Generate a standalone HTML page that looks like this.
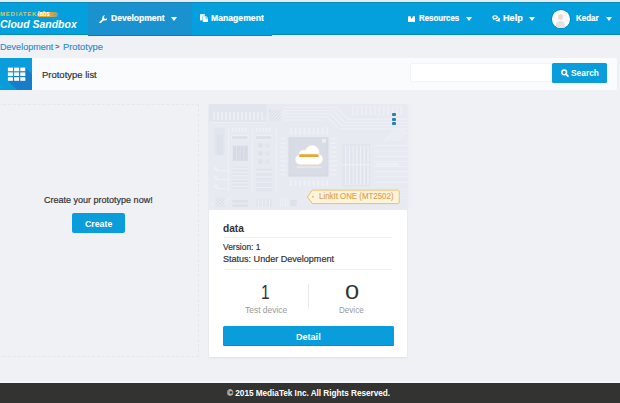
<!DOCTYPE html>
<html><head><meta charset="utf-8">
<style>
*{box-sizing:border-box;margin:0;padding:0}
html,body{width:620px;height:403px;overflow:hidden;background:#f0f1f5;font-family:"Liberation Sans",sans-serif;color:#333}
body{position:relative}
.abs{position:absolute}
.tx{white-space:nowrap}
#topstrip{left:0;top:0;width:620px;height:2px;background:#e6ecf4}
#hdr{left:0;top:2px;width:620px;height:32.7px;background:#04a0dd;box-shadow:inset 0 1px 0 rgba(20,110,140,.45), inset 0 -1px 0 rgba(0,70,120,.25)}
#navb{left:88px;top:2px;width:184px;height:33.6px;background:#04a0dd;box-shadow:inset 0 1px 0 rgba(20,110,140,.45), inset 0 -1px 0 rgba(0,70,120,.3)}
#act{left:88px;top:2px;width:104px;height:33.6px;background:#1a92cf;box-shadow:inset 0 1px 0 rgba(20,110,140,.45), inset 0 -1px 0 rgba(0,60,110,.3)}
.car{width:0;height:0;border-left:3.7px solid transparent;border-right:3.7px solid transparent;border-top:4.4px solid #fff}
#bar{left:0;top:58px;width:617px;height:31.5px;background:#fafbfd;border-radius:0 2px 2px 0}
#gridic{left:0;top:58px;width:31.7px;height:31.7px;background:#0a9ddb;overflow:hidden}
#sinput{left:410px;top:62.5px;width:141.5px;height:19.7px;background:#fff;border:1px solid #f3f4f8}
#sbtn{left:552px;top:63px;width:55px;height:19.5px;background:#0a9ddb;border-radius:1.5px}
#dash{left:-2px;top:104.1px;width:200.7px;height:252.6px;border:1px dashed #e6e8ee}
#cbtn{left:71.8px;top:213px;width:52.8px;height:20.2px;background:#0a9ddb;border-radius:2px}
#card{left:208.8px;top:104.2px;width:198.4px;height:253.1px;background:#fff;box-shadow:0 1px 2px rgba(60,70,100,.10)}
#cimg{left:208.8px;top:104.2px;width:198.4px;height:105.5px;background:#e7eaf1;overflow:hidden}
.hr{left:223.6px;width:168.7px;height:1px;background:#eceef2}
#dbtn{left:223.3px;top:325.8px;width:170.3px;height:20.4px;background:#0a9ddb;border-radius:1.5px;box-shadow:inset 0 -1px 0 rgba(0,60,110,.18)}
#ftr{left:0;top:383.2px;width:620px;height:20px;background:#333431;box-shadow:0 -1.6px 0 #f8f9fb}
</style></head><body>
<div class="abs" id="topstrip"></div>
<div class="abs" id="hdr"></div>
<div class="abs" id="navb"></div>
<div class="abs" id="act"></div>
<div class="abs" style="left:36.8px;top:11.7px;width:21.4px;height:5.8px;border-radius:2.9px;background:linear-gradient(90deg,#f2a52c 0%,#f0a736 55%,rgba(225,165,70,.55) 100%)"></div>

<svg class="abs" style="left:98.9px;top:14.6px" width="8.6" height="8.8" viewBox="0 0 10 10"><path d="M1.3 8.7 L5.4 4.6" stroke="#fff" stroke-width="2.1" stroke-linecap="round" fill="none"/><path d="M6.9 0.3 A3 3 0 1 0 9.7 3.1 L8.1 4.6 L6.2 4.3 L5.6 2.1 Z" fill="#fff"/></svg>
<div class="abs car" style="left:171.4px;top:16.9px"></div>
<svg class="abs" style="left:199.7px;top:14.1px" width="8.2" height="8.2" viewBox="0 0 8.2 8.2"><path d="M0 0.2 H4.9 V6.4 H0 Z" fill="#fff"/><path d="M2.9 2.2 H6.2 L8.2 4.1 V8.2 H2.9 Z" fill="#fff" stroke="#0a9ddb" stroke-width=".7"/><path d="M2.9 2.2 H6.2 L8.2 4.1 V8.2 H2.9 Z" fill="#fff"/><path d="M6 2.4 V4.3 H8" stroke="#0a9ddb" stroke-width=".6" fill="none"/></svg>

<svg class="abs" style="left:408px;top:15.5px" width="7.4" height="6.6" viewBox="0 0 7.4 6.6"><rect x="0" y="0.2" width="7.4" height="6.2" rx=".6" fill="#fff"/><path d="M2.4 0.2 H5 L3.7 2.9 Z" fill="#1a78a8"/></svg>
<div class="abs car" style="left:465.6px;top:16.9px"></div>
<svg class="abs" style="left:491.8px;top:15.4px" width="8.6" height="7.4" viewBox="0 0 10 8.8"><path d="M3.6 0.2 C5.6 0.2 7 1.3 7 2.8 C7 4.3 5.6 5.4 3.6 5.4 C3.2 5.4 2.9 5.4 2.6 5.3 L0.9 6.2 L1.4 4.8 C0.6 4.3 0.2 3.6 0.2 2.8 C0.2 1.3 1.6 0.2 3.6 0.2 Z" fill="#fff"/><ellipse cx="3.6" cy="2.8" rx="1.9" ry="1.2" fill="#2aa6dc"/><path d="M7.8 2.9 C9 3.3 9.8 4.1 9.8 5.1 C9.8 5.8 9.4 6.4 8.7 6.9 L9.2 8.2 L7.6 7.4 C7.3 7.5 6.9 7.5 6.6 7.5 C5.5 7.5 4.6 7.1 4 6.4 C6.3 6.2 7.9 4.8 7.8 2.9 Z" fill="#fff"/></svg>
<div class="abs car" style="left:528.9px;top:16.9px"></div>
<div class="abs" style="left:552.1px;top:10.3px;width:17.5px;height:17.5px;border-radius:50%;background:#fbfbfc;overflow:hidden;box-shadow:0 0 0 .8px rgba(0,70,120,.3)"><div class="abs" style="left:6.4px;top:4.2px;width:4.7px;height:5.8px;border-radius:50%;background:#ecdcd4"></div><div class="abs" style="left:4.4px;top:11px;width:8.8px;height:8px;border-radius:50% 50% 0 0;background:#e6e2e4"></div></div>
<div class="abs car" style="left:605.6px;top:16.9px"></div>

<div class="abs" id="bar"></div>
<div class="abs" id="gridic">
<svg class="abs" style="left:0;top:0" width="32" height="32" viewBox="0 0 32 32"><path d="M25.3 9.6 L32 16.3 V32 H17.1 L7.9 22.8 Z" fill="#1778c6" opacity=".85"/>
<g fill="#fff"><rect x="7.9" y="9.6" width="5" height="3.6"/><rect x="14.1" y="9.6" width="5" height="3.6"/><rect x="20.3" y="9.6" width="5" height="3.6"/><rect x="7.9" y="14.4" width="5" height="3.6"/><rect x="14.1" y="14.4" width="5" height="3.6"/><rect x="20.3" y="14.4" width="5" height="3.6"/><rect x="7.9" y="19.2" width="5" height="3.6"/><rect x="14.1" y="19.2" width="5" height="3.6"/><rect x="20.3" y="19.2" width="5" height="3.6"/></g></svg>
</div>
<div class="abs" id="sinput"></div>
<div class="abs" id="sbtn"></div>
<svg class="abs" style="left:561.2px;top:69.4px" width="7.8" height="8" viewBox="0 0 8 8"><circle cx="3.3" cy="3.3" r="2.4" stroke="#fff" stroke-width="1.6" fill="none"/><path d="M5.2 5.2 L7.1 7.1" stroke="#fff" stroke-width="1.8" stroke-linecap="round"/></svg>

<div class="abs" id="dash"></div>
<div class="abs" id="cbtn"></div>

<div class="abs" id="card"></div>
<div class="abs" id="cimg">
<svg class="abs" style="left:0;top:0" width="198.4" height="106" viewBox="208.8 104.2 198.4 106"><rect x="208.8" y="104.0" width="57.2" height="18.0" fill="#e1e5ed"/><rect x="213.0" y="112.0" width="1.6" height="8.0" fill="#eef0f6"/><rect x="217.0" y="112.0" width="1.6" height="8.0" fill="#eef0f6"/><rect x="221.0" y="112.0" width="1.6" height="8.0" fill="#eef0f6"/><rect x="225.0" y="112.0" width="1.6" height="8.0" fill="#eef0f6"/><rect x="229.0" y="112.0" width="1.6" height="8.0" fill="#eef0f6"/><rect x="233.0" y="112.0" width="1.6" height="8.0" fill="#eef0f6"/><rect x="237.0" y="112.0" width="1.6" height="8.0" fill="#eef0f6"/><rect x="241.0" y="112.0" width="1.6" height="8.0" fill="#eef0f6"/><rect x="245.0" y="112.0" width="1.6" height="8.0" fill="#eef0f6"/><rect x="249.0" y="112.0" width="1.6" height="8.0" fill="#eef0f6"/><rect x="253.0" y="112.0" width="1.6" height="8.0" fill="#eef0f6"/><rect x="257.0" y="112.0" width="1.6" height="8.0" fill="#eef0f6"/><rect x="261.0" y="112.0" width="1.6" height="8.0" fill="#eef0f6"/><path d="M210.0 123.0 L266.0 123.0" stroke="#eef0f6" stroke-width="1" fill="none"/><rect x="269.0" y="110.0" width="11.5" height="10.5" fill="#dde1ea"/><path d="M262.6 120.5 L273.1 110.0" stroke="#eef0f6" stroke-width="1" fill="none"/><path d="M265.8 120.5 L276.3 110.0" stroke="#eef0f6" stroke-width="1" fill="none"/><path d="M269.0 120.5 L279.5 110.0" stroke="#eef0f6" stroke-width="1" fill="none"/><path d="M272.2 120.5 L282.7 110.0" stroke="#eef0f6" stroke-width="1" fill="none"/><path d="M275.4 120.5 L285.9 110.0" stroke="#eef0f6" stroke-width="1" fill="none"/><path d="M278.6 120.5 L289.1 110.0" stroke="#eef0f6" stroke-width="1" fill="none"/><path d="M283.0 107.5 L336.0 107.5" stroke="#eef0f6" stroke-width="1" fill="none"/><path d="M283.0 110.7 L333.0 110.7" stroke="#eef0f6" stroke-width="1" fill="none"/><path d="M283.0 113.9 L330.0 113.9" stroke="#eef0f6" stroke-width="1" fill="none"/><path d="M283.0 117.1 L327.0 117.1" stroke="#eef0f6" stroke-width="1" fill="none"/><path d="M283.0 120.3 L324.0 120.3" stroke="#eef0f6" stroke-width="1" fill="none"/><path d="M336.0 107.5 L348.0 119.5" stroke="#eef0f6" stroke-width="1.2" fill="none"/><path d="M348.0 119.5 L408.0 119.5" stroke="#eef0f6" stroke-width="1" fill="none"/><path d="M333.0 110.7 L345.0 122.7" stroke="#eef0f6" stroke-width="1.2" fill="none"/><path d="M345.0 122.7 L408.0 122.7" stroke="#eef0f6" stroke-width="1" fill="none"/><path d="M330.0 113.9 L342.0 125.9" stroke="#eef0f6" stroke-width="1.2" fill="none"/><path d="M342.0 125.9 L408.0 125.9" stroke="#eef0f6" stroke-width="1" fill="none"/><path d="M327.0 117.1 L339.0 129.1" stroke="#eef0f6" stroke-width="1.2" fill="none"/><path d="M339.0 129.1 L408.0 129.1" stroke="#eef0f6" stroke-width="1" fill="none"/><rect x="352.0" y="106.0" width="1.5" height="9.0" fill="#eef0f6"/><rect x="356.4" y="106.0" width="1.5" height="9.0" fill="#eef0f6"/><rect x="360.8" y="106.0" width="1.5" height="9.0" fill="#eef0f6"/><rect x="365.2" y="106.0" width="1.5" height="9.0" fill="#eef0f6"/><rect x="369.6" y="106.0" width="1.5" height="9.0" fill="#eef0f6"/><rect x="374.0" y="106.0" width="1.5" height="9.0" fill="#eef0f6"/><rect x="378.4" y="106.0" width="1.5" height="9.0" fill="#eef0f6"/><rect x="382.8" y="106.0" width="1.5" height="9.0" fill="#eef0f6"/><rect x="387.2" y="106.0" width="1.5" height="9.0" fill="#eef0f6"/><rect x="391.6" y="106.0" width="1.5" height="9.0" fill="#eef0f6"/><rect x="396.0" y="106.0" width="1.5" height="9.0" fill="#eef0f6"/><rect x="400.4" y="106.0" width="1.5" height="9.0" fill="#eef0f6"/><path d="M384.0 141.0 L396.0 129.0" stroke="#eef0f6" stroke-width="1.2" fill="none"/><path d="M387.5 141.0 L399.5 129.0" stroke="#eef0f6" stroke-width="1.2" fill="none"/><path d="M391.0 141.0 L403.0 129.0" stroke="#eef0f6" stroke-width="1.2" fill="none"/><path d="M394.5 141.0 L406.5 129.0" stroke="#eef0f6" stroke-width="1.2" fill="none"/><path d="M398.0 141.0 L410.0 129.0" stroke="#eef0f6" stroke-width="1.2" fill="none"/><rect x="214.5" y="128.0" width="10.0" height="27.0" fill="#e1e5ed"/><rect x="216.5" y="135.0" width="6.0" height="20.0" fill="#dde1ea"/><rect x="232.0" y="128.0" width="1.8" height="4.0" fill="#eef0f6"/><rect x="235.2" y="128.0" width="1.8" height="4.0" fill="#eef0f6"/><rect x="238.4" y="128.0" width="1.8" height="4.0" fill="#eef0f6"/><rect x="241.6" y="128.0" width="1.8" height="4.0" fill="#eef0f6"/><rect x="244.8" y="128.0" width="1.8" height="4.0" fill="#eef0f6"/><rect x="256.0" y="128.0" width="1.8" height="4.0" fill="#eef0f6"/><rect x="259.2" y="128.0" width="1.8" height="4.0" fill="#eef0f6"/><rect x="262.4" y="128.0" width="1.8" height="4.0" fill="#eef0f6"/><rect x="265.6" y="128.0" width="1.8" height="4.0" fill="#eef0f6"/><rect x="268.8" y="128.0" width="1.8" height="4.0" fill="#eef0f6"/><rect x="231" y="135.6" width="17.2" height="4.4" rx="2.2" fill="#dde1ea" stroke="#eef0f6" stroke-width="1"/><rect x="255" y="135.6" width="17.2" height="4.4" rx="2.2" fill="#dde1ea" stroke="#eef0f6" stroke-width="1"/><rect x="232.6" y="146.0" width="15.0" height="15.0" fill="#d6dae4"/><rect x="236.0" y="146.0" width="0.8" height="15.0" fill="#e1e5ed"/><rect x="239.6" y="146.0" width="0.8" height="15.0" fill="#e1e5ed"/><rect x="243.2" y="146.0" width="0.8" height="15.0" fill="#e1e5ed"/><rect x="258.0" y="143.5" width="4.5" height="4.5" fill="#dde1ea"/><rect x="265.0" y="143.5" width="4.5" height="4.5" fill="#e1e5ed"/><rect x="258.0" y="151.5" width="4.5" height="4.5" fill="#dde1ea"/><rect x="265.0" y="151.5" width="4.5" height="4.5" fill="#e1e5ed"/><rect x="258.0" y="159.5" width="4.5" height="4.5" fill="#dde1ea"/><rect x="265.0" y="159.5" width="4.5" height="4.5" fill="#e1e5ed"/><path d="M252.0 128.0 L252.0 192.0" stroke="#eef0f6" stroke-width="1" fill="none"/><path d="M276.0 128.0 L276.0 192.0" stroke="#eef0f6" stroke-width="1" fill="none"/><path d="M228.0 128.0 L228.0 192.0" stroke="#eef0f6" stroke-width="1" fill="none"/><rect x="280.0" y="138.0" width="6.0" height="1.6" fill="#eef0f6"/><rect x="280.0" y="142.5" width="6.0" height="1.6" fill="#eef0f6"/><rect x="280.0" y="147.0" width="6.0" height="1.6" fill="#eef0f6"/><rect x="280.0" y="151.5" width="6.0" height="1.6" fill="#eef0f6"/><rect x="280.0" y="156.0" width="6.0" height="1.6" fill="#eef0f6"/><rect x="280.0" y="160.5" width="6.0" height="1.6" fill="#eef0f6"/><rect x="280.0" y="165.0" width="6.0" height="1.6" fill="#eef0f6"/><rect x="280.0" y="169.5" width="6.0" height="1.6" fill="#eef0f6"/><rect x="280.0" y="174.0" width="6.0" height="1.6" fill="#eef0f6"/><rect x="290.0" y="128.0" width="1.8" height="6.8" fill="#eef0f6"/><rect x="290.0" y="180.0" width="1.8" height="6.2" fill="#eef0f6"/><rect x="294.5" y="128.0" width="1.8" height="6.8" fill="#eef0f6"/><rect x="294.5" y="180.0" width="1.8" height="6.2" fill="#eef0f6"/><rect x="299.0" y="128.0" width="1.8" height="6.8" fill="#eef0f6"/><rect x="299.0" y="180.0" width="1.8" height="6.2" fill="#eef0f6"/><rect x="303.5" y="128.0" width="1.8" height="6.8" fill="#eef0f6"/><rect x="303.5" y="180.0" width="1.8" height="6.2" fill="#eef0f6"/><rect x="308.0" y="128.0" width="1.8" height="6.8" fill="#eef0f6"/><rect x="308.0" y="180.0" width="1.8" height="6.2" fill="#eef0f6"/><rect x="312.5" y="128.0" width="1.8" height="6.8" fill="#eef0f6"/><rect x="312.5" y="180.0" width="1.8" height="6.2" fill="#eef0f6"/><rect x="317.0" y="128.0" width="1.8" height="6.8" fill="#eef0f6"/><rect x="317.0" y="180.0" width="1.8" height="6.2" fill="#eef0f6"/><rect x="321.5" y="128.0" width="1.8" height="6.8" fill="#eef0f6"/><rect x="321.5" y="180.0" width="1.8" height="6.2" fill="#eef0f6"/><rect x="326.0" y="128.0" width="1.8" height="6.8" fill="#eef0f6"/><rect x="326.0" y="180.0" width="1.8" height="6.2" fill="#eef0f6"/><rect x="330.5" y="138.0" width="6.0" height="1.6" fill="#eef0f6"/><rect x="330.5" y="142.5" width="6.0" height="1.6" fill="#eef0f6"/><rect x="330.5" y="147.0" width="6.0" height="1.6" fill="#eef0f6"/><rect x="330.5" y="151.5" width="6.0" height="1.6" fill="#eef0f6"/><rect x="330.5" y="156.0" width="6.0" height="1.6" fill="#eef0f6"/><rect x="330.5" y="160.5" width="6.0" height="1.6" fill="#eef0f6"/><rect x="330.5" y="165.0" width="6.0" height="1.6" fill="#eef0f6"/><rect x="330.5" y="169.5" width="6.0" height="1.6" fill="#eef0f6"/><rect x="330.5" y="174.0" width="6.0" height="1.6" fill="#eef0f6"/><rect x="288.2" y="137.4" width="40.0" height="39.4" fill="#d6dae4"/><rect x="290.2" y="139.4" width="36.0" height="35.4" fill="#d8dce5"/><rect x="322.0" y="139.2" width="3.6" height="3.6" fill="#eef0f6"/><rect x="232.0" y="167.0" width="16.0" height="24.0" fill="#e1e5ed"/><path d="M232.0 169.0 L248.0 169.0" stroke="#eef0f6" stroke-width="1" fill="none"/><path d="M232.0 172.5 L248.0 172.5" stroke="#eef0f6" stroke-width="1" fill="none"/><path d="M232.0 176.0 L248.0 176.0" stroke="#eef0f6" stroke-width="1" fill="none"/><path d="M232.0 179.5 L248.0 179.5" stroke="#eef0f6" stroke-width="1" fill="none"/><path d="M232.0 183.0 L248.0 183.0" stroke="#eef0f6" stroke-width="1" fill="none"/><path d="M232.0 186.5 L248.0 186.5" stroke="#eef0f6" stroke-width="1" fill="none"/><path d="M232.0 190.0 L248.0 190.0" stroke="#eef0f6" stroke-width="1" fill="none"/><rect x="256.0" y="168.5" width="16.0" height="23.0" fill="#e1e5ed"/><path d="M256.0 172.0 L272.0 172.0" stroke="#eef0f6" stroke-width="1" fill="none"/><path d="M256.0 177.2 L272.0 177.2" stroke="#eef0f6" stroke-width="1" fill="none"/><path d="M256.0 182.4 L272.0 182.4" stroke="#eef0f6" stroke-width="1" fill="none"/><path d="M256.0 187.6 L272.0 187.6" stroke="#eef0f6" stroke-width="1" fill="none"/><rect x="214.0" y="167.0" width="3.0" height="3.0" fill="#eef0f6"/><path d="M216.0 171.0 L230.0 171.0" stroke="#eef0f6" stroke-width="1" fill="none"/><rect x="214.0" y="176.0" width="3.0" height="3.0" fill="#eef0f6"/><path d="M216.0 180.0 L230.0 180.0" stroke="#eef0f6" stroke-width="1" fill="none"/><rect x="214.0" y="185.0" width="3.0" height="3.0" fill="#eef0f6"/><path d="M216.0 189.0 L230.0 189.0" stroke="#eef0f6" stroke-width="1" fill="none"/><rect x="215.0" y="197.5" width="9.5" height="9.5" fill="#dde1ea"/><path d="M208.4 207.0 L217.9 197.5" stroke="#eef0f6" stroke-width="1" fill="none"/><path d="M211.7 207.0 L221.2 197.5" stroke="#eef0f6" stroke-width="1" fill="none"/><path d="M215.0 207.0 L224.5 197.5" stroke="#eef0f6" stroke-width="1" fill="none"/><path d="M218.3 207.0 L227.8 197.5" stroke="#eef0f6" stroke-width="1" fill="none"/><path d="M221.6 207.0 L231.1 197.5" stroke="#eef0f6" stroke-width="1" fill="none"/><rect x="232.0" y="200.2" width="16.0" height="2.6" fill="#dde1ea"/><rect x="232.0" y="204.4" width="16.0" height="2.6" fill="#dde1ea"/><rect x="256.0" y="199.5" width="16.0" height="7.5" fill="#e1e5ed"/><rect x="258.0" y="199.5" width="1.0" height="7.5" fill="#eef0f6"/><rect x="261.6" y="199.5" width="1.0" height="7.5" fill="#eef0f6"/><rect x="265.2" y="199.5" width="1.0" height="7.5" fill="#eef0f6"/><rect x="268.8" y="199.5" width="1.0" height="7.5" fill="#eef0f6"/><rect x="290.0" y="200.0" width="6.5" height="6.5" fill="#dde1ea"/><rect x="280.0" y="198.0" width="1.0" height="9.0" fill="#eef0f6"/><rect x="282.4" y="198.0" width="1.0" height="9.0" fill="#eef0f6"/><rect x="284.8" y="198.0" width="1.0" height="9.0" fill="#eef0f6"/><rect x="287.2" y="198.0" width="1.0" height="9.0" fill="#eef0f6"/><rect x="342.0" y="144.0" width="28.0" height="43.0" fill="#e1e5ed"/><rect x="345.0" y="146.0" width="1.2" height="39.0" fill="#eef0f6"/><rect x="348.7" y="146.0" width="1.2" height="39.0" fill="#eef0f6"/><rect x="352.4" y="146.0" width="1.2" height="39.0" fill="#eef0f6"/><rect x="356.1" y="146.0" width="1.2" height="39.0" fill="#eef0f6"/><rect x="359.8" y="146.0" width="1.2" height="39.0" fill="#eef0f6"/><rect x="363.5" y="146.0" width="1.2" height="39.0" fill="#eef0f6"/><rect x="367.2" y="146.0" width="1.2" height="39.0" fill="#eef0f6"/><path d="M342.0 165.0 L370.0 165.0" stroke="#eef0f6" stroke-width="1.2" fill="none"/><path d="M374.0 146.0 L407.0 146.0" stroke="#eef0f6" stroke-width="1" fill="none"/><path d="M374.0 151.2 L407.0 151.2" stroke="#eef0f6" stroke-width="1" fill="none"/><path d="M374.0 156.4 L407.0 156.4" stroke="#eef0f6" stroke-width="1" fill="none"/><path d="M374.0 161.6 L407.0 161.6" stroke="#eef0f6" stroke-width="1" fill="none"/><path d="M374.0 166.8 L407.0 166.8" stroke="#eef0f6" stroke-width="1" fill="none"/><path d="M374.0 172.0 L407.0 172.0" stroke="#eef0f6" stroke-width="1" fill="none"/><path d="M374.0 177.2 L407.0 177.2" stroke="#eef0f6" stroke-width="1" fill="none"/><path d="M374.0 182.4 L407.0 182.4" stroke="#eef0f6" stroke-width="1" fill="none"/><rect x="376.0" y="163.0" width="22.0" height="3.0" fill="#eef0f6"/><path d="M334.0 190.0 L408.0 190.0" stroke="#eef0f6" stroke-width="0.8" fill="none"/><path d="M334.0 193.0 L408.0 193.0" stroke="#eef0f6" stroke-width="0.8" fill="none"/><path d="M334.0 196.0 L408.0 196.0" stroke="#eef0f6" stroke-width="0.8" fill="none"/><path d="M334.0 199.0 L408.0 199.0" stroke="#eef0f6" stroke-width="0.8" fill="none"/></svg>
</div>
<svg class="abs" style="left:290px;top:140px" width="40" height="32" viewBox="290 140 40 32">
<g fill="#fbefd6" stroke="#fbefd6" stroke-width="1.4"><circle cx="300.2" cy="159.6" r="4.4"/><circle cx="317.6" cy="159.2" r="4.8"/><circle cx="312.2" cy="152.3" r="6.6"/><circle cx="304" cy="154.8" r="4.6"/><rect x="300.2" y="156" width="17.4" height="8"/></g>
<g fill="#fff"><circle cx="300.2" cy="159.6" r="4.4"/><circle cx="317.6" cy="159.2" r="4.8"/><circle cx="312.2" cy="152.3" r="6.6"/><circle cx="304" cy="154.8" r="4.6"/><rect x="300.2" y="155" width="17.4" height="9"/></g>
<rect x="299.2" y="154.3" width="19.4" height="2.7" rx=".8" fill="#e8a633"/>
<rect x="296.5" y="166.2" width="25" height="1.8" fill="#e4e7ef"/>
</svg>
<svg class="abs" style="left:305px;top:188px" width="97" height="18" viewBox="305 188 97 18">
<path d="M312.4 190.1 H397.6 Q399.2 190.1 399.2 191.7 V202 Q399.2 203.6 397.6 203.6 H312.4 L307.4 196.85 Z" fill="#fdf4de" stroke="#ecc06a" stroke-width="1"/>
<circle cx="312.8" cy="196.85" r="1" fill="#ecc06a"/>
</svg>
<div class="abs" style="left:391.9px;top:112.9px;width:4.1px;height:3.4px;border-radius:.9px;background:#2d7fba"></div>
<div class="abs" style="left:391.9px;top:117.5px;width:4.1px;height:3.3px;border-radius:.9px;background:#2d7fba"></div>
<div class="abs" style="left:391.9px;top:122.1px;width:4.1px;height:3.4px;border-radius:.9px;background:#2d7fba"></div><div class="abs" style="left:407.2px;top:104.2px;width:8px;height:104px;background:linear-gradient(90deg,rgba(232,236,246,.4),rgba(238,240,248,.15))"></div>
<div class="abs hr" style="top:237px"></div>
<div class="abs hr" style="top:268.5px"></div>
<div class="abs" style="left:308px;top:283.5px;width:1px;height:25.5px;background:#e9ebf0"></div>
<div class="abs" id="dbtn"></div>
<div class="abs" id="ftr"></div>
<div class="abs tx" id="t_mtk" style="left:-0.00px;top:11.12px;font-size:6px;line-height:6px;font-weight:bold;color:#d4c56e;letter-spacing:0.787px;transform:scaleX(1.0000);transform-origin:0 0;">MEDIATEK</div>
<div class="abs tx" id="t_labs" style="left:37.95px;top:10.37px;font-size:7px;line-height:7px;font-weight:bold;color:#fff;letter-spacing:0.000px;transform:scaleX(0.8491);transform-origin:0 0;">labs</div>
<div class="abs tx" id="t_logo" style="left:-0.26px;top:19.02px;font-size:11.2px;line-height:11.2px;font-weight:bold;color:#fff;letter-spacing:0.000px;transform:scaleX(0.9351);transform-origin:0 0;font-style:italic;">Cloud Sandbox</div>
<div class="abs tx" id="t_dev" style="left:111.23px;top:14.23px;font-size:9.3px;line-height:9.3px;font-weight:bold;color:#fff;letter-spacing:0.000px;transform:scaleX(0.9185);transform-origin:0 0;-webkit-text-stroke:0.2px #fff;">Development</div>
<div class="abs tx" id="t_mgmt" style="left:211.44px;top:14.23px;font-size:9.3px;line-height:9.3px;font-weight:bold;color:#fff;letter-spacing:0.000px;transform:scaleX(0.9296);transform-origin:0 0;-webkit-text-stroke:0.2px #fff;">Management</div>
<div class="abs tx" id="t_res" style="left:418.84px;top:14.23px;font-size:9.3px;line-height:9.3px;font-weight:bold;color:#fff;letter-spacing:0.000px;transform:scaleX(0.8461);transform-origin:0 0;-webkit-text-stroke:0.2px #fff;">Resources</div>
<div class="abs tx" id="t_help" style="left:503.14px;top:14.23px;font-size:9.3px;line-height:9.3px;font-weight:bold;color:#fff;letter-spacing:0.000px;transform:scaleX(0.9789);transform-origin:0 0;-webkit-text-stroke:0.2px #fff;">Help</div>
<div class="abs tx" id="t_kedar" style="left:576.43px;top:14.23px;font-size:9.3px;line-height:9.3px;font-weight:bold;color:#fff;letter-spacing:0.000px;transform:scaleX(0.8547);transform-origin:0 0;-webkit-text-stroke:0.2px #fff;">Kedar</div>
<div class="abs tx" id="t_bc1" style="left:-0.18px;top:42.06px;font-size:9.5px;line-height:9.5px;font-weight:normal;color:#2b8dc8;letter-spacing:0.000px;transform:scaleX(0.9529);transform-origin:0 0;-webkit-text-stroke:0.15px #2b8dc8;">Development</div>
<div class="abs tx" id="t_bc2" style="left:55.20px;top:43.03px;font-size:8px;line-height:8px;font-weight:bold;color:#666;letter-spacing:0.000px;transform:scaleX(0.9846);transform-origin:0 0;">&gt;</div>
<div class="abs tx" id="t_bc3" style="left:62.52px;top:42.06px;font-size:9.5px;line-height:9.5px;font-weight:normal;color:#2b8dc8;letter-spacing:0.000px;transform:scaleX(0.9823);transform-origin:0 0;-webkit-text-stroke:0.15px #2b8dc8;">Prototype</div>
<div class="abs tx" id="t_pl" style="left:41.52px;top:69.76px;font-size:9.5px;line-height:9.5px;font-weight:normal;color:#333;letter-spacing:0.000px;transform:scaleX(0.9969);transform-origin:0 0;-webkit-text-stroke:0.2px #333;">Prototype list</div>
<div class="abs tx" id="t_search" style="left:570.62px;top:68.46px;font-size:9.5px;line-height:9.5px;font-weight:bold;color:#fff;letter-spacing:0.000px;transform:scaleX(0.8821);transform-origin:0 0;">Search</div>
<div class="abs tx" id="t_cnow" style="left:44.23px;top:194.76px;font-size:9.5px;line-height:9.5px;font-weight:normal;color:#333;letter-spacing:0.000px;transform:scaleX(0.9481);transform-origin:0 0;-webkit-text-stroke:0.2px #333;">Create your prototype now!</div>
<div class="abs tx" id="t_create" style="left:84.93px;top:218.76px;font-size:9.5px;line-height:9.5px;font-weight:bold;color:#fff;letter-spacing:0.000px;transform:scaleX(0.9213);transform-origin:0 0;">Create</div>
<div class="abs tx" id="t_data" style="left:223.36px;top:222.66px;font-size:10.8px;line-height:10.8px;font-weight:bold;color:#333;letter-spacing:0.000px;transform:scaleX(0.9404);transform-origin:0 0;">data</div>
<div class="abs tx" id="t_ver" style="left:223.33px;top:242.46px;font-size:9.5px;line-height:9.5px;font-weight:normal;color:#333;letter-spacing:0.000px;transform:scaleX(0.8864);transform-origin:0 0;-webkit-text-stroke:0.2px #333;">Version: 1</div>
<div class="abs tx" id="t_stat" style="left:223.33px;top:253.66px;font-size:9.5px;line-height:9.5px;font-weight:normal;color:#333;letter-spacing:0.000px;transform:scaleX(0.9507);transform-origin:0 0;-webkit-text-stroke:0.2px #333;">Status: Under Development</div>
<div class="abs tx" id="t_n1" style="left:260.88px;top:282.45px;font-size:20.5px;line-height:20.5px;font-weight:normal;color:#333;letter-spacing:0.000px;transform:scaleX(0.7584);transform-origin:0 0;">1</div>
<div class="abs tx" id="t_n0" style="left:344.68px;top:282.45px;font-size:20.5px;line-height:20.5px;font-weight:normal;color:#333;letter-spacing:0.000px;transform:scaleX(1.2405);transform-origin:0 0;">0</div>
<div class="abs tx" id="t_td" style="left:244.53px;top:305.06px;font-size:9.5px;line-height:9.5px;font-weight:normal;color:#999;letter-spacing:0.000px;transform:scaleX(0.8889);transform-origin:0 0;">Test device</div>
<div class="abs tx" id="t_d" style="left:339.02px;top:305.06px;font-size:9.5px;line-height:9.5px;font-weight:normal;color:#999;letter-spacing:0.000px;transform:scaleX(0.8486);transform-origin:0 0;">Device</div>
<div class="abs tx" id="t_detail" style="left:296.02px;top:332.06px;font-size:9.5px;line-height:9.5px;font-weight:bold;color:#fff;letter-spacing:0.000px;transform:scaleX(0.9527);transform-origin:0 0;">Detail</div>
<div class="abs tx" id="t_tag" style="left:318.75px;top:192.20px;font-size:9.1px;line-height:9.1px;font-weight:normal;color:#dea24a;letter-spacing:0.000px;transform:scaleX(0.8672);transform-origin:0 0;-webkit-text-stroke:0.15px #dea24a;">LinkIt ONE (MT2502)</div>
<div class="abs tx" id="t_foot" style="left:227.31px;top:387.70px;font-size:9.8px;line-height:9.8px;font-weight:bold;color:#fff;letter-spacing:-0.037px;transform:scaleX(0.8400);transform-origin:0 0;">© 2015 MediaTek Inc. All Rights Reserved.</div>
</body></html>
